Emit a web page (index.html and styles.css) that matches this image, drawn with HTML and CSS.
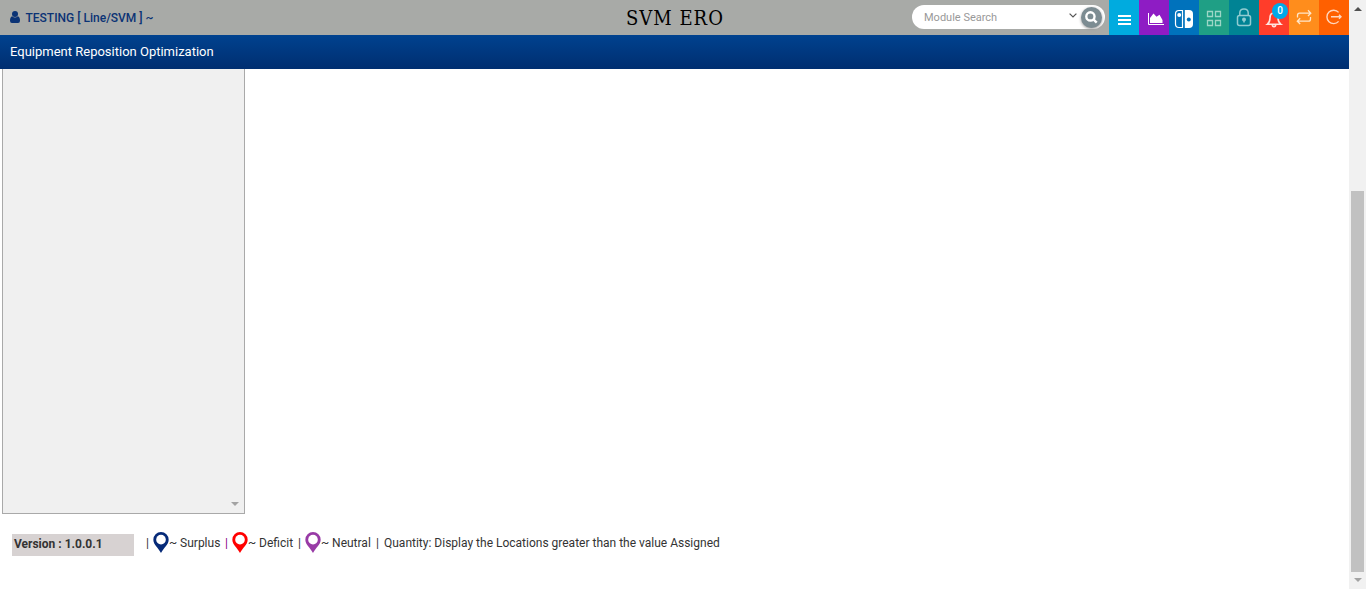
FILE: index.html
```html
<!DOCTYPE html>
<html lang="en">
<head>
<meta charset="utf-8">
<title>SVM ERO</title>
<link rel="stylesheet" href="styles.css">
</head>
<body>
<div class="app">
  <div class="page">
    <header class="topbar">
      <div class="user">
        <svg class="user-icon" width="10" height="12" viewBox="0 0 10 12"><circle cx="5" cy="3" r="3"/><path d="M2.2 5.3Q5 7.8 7.8 5.3Q10 6 10 9.8Q10 12 8 12H2Q0 12 0 9.8Q0 6 2.2 5.3Z"/></svg>
        <span class="user-name">TESTING [ Line/SVM ] ~</span>
      </div>
      <h1 class="title">SVM ERO</h1>
      <div class="tools">
        <div class="search">
          <span class="search-text">Module Search</span>
          <svg class="chevron" width="8" height="5" viewBox="0 0 8 5"><path d="M.6.6L4 4L7.4.6"/></svg>
          <span class="search-button"><svg width="13" height="13" viewBox="0 0 12 12"><circle cx="5" cy="5" r="3.8"/><path d="M8 8L10.8 10.8"/></svg></span>
        </div>
        <nav class="tiles">
          <a class="tile menu"><svg width="30" height="35" viewBox="0 0 30 35"><path d="M9 16H22M9 20H22M9 24H22" stroke="#fff" stroke-width="2"/></svg></a>
          <a class="tile chart"><svg width="30" height="35" viewBox="0 0 30 35"><path d="M9.5 13V24.5H25" fill="none" stroke="#fff"/><path d="M11 23V18L14.5 13.5L17.5 16.8L20.5 14.8L23.5 20V23Z" fill="#fff"/></svg></a>
          <a class="tile switch"><svg width="30" height="35" viewBox="0 0 30 35"><path d="M13.5 10.5H10Q6.5 10.5 6.5 14V24Q6.5 27.5 10 27.5H13.5Z" fill="none" stroke="#fff" stroke-width="1.2"/><circle cx="10.2" cy="15" r="2" fill="#fff"/><path d="M15.8 10H20Q24 10 24 14V24Q24 28 20 28H15.8Z" fill="#fff"/><circle cx="19.8" cy="19.5" r="2" fill="#0072bc"/></svg></a>
          <a class="tile grid"><svg width="30" height="35" viewBox="0 0 30 35"><path d="M8.5 11.5H13.5V16.5H8.5ZM16.5 11.5H21.5V16.5H16.5ZM8.5 20.5H13.5V25.5H8.5ZM16.5 20.5H21.5V25.5H16.5Z" fill="none" stroke="#9cd6c6" stroke-width="1.3"/></svg></a>
          <a class="tile lock"><svg width="30" height="35" viewBox="0 0 30 35"><g fill="none" stroke="#91ccd1" stroke-width="1.5"><rect x="8.5" y="15.5" width="13" height="10" rx="2"/><path d="M10.8 15.5V13Q10.8 9 15 9T19.2 13V15.5"/></g><circle cx="15" cy="19.4" r="2" fill="#91ccd1"/><path d="M15 19V22.5" stroke="#91ccd1" stroke-width="1.5"/></svg></a>
          <a class="tile bell"><svg width="30" height="35" viewBox="0 0 30 35"><path d="M8.3 24.3Q11 22 11 18Q11 13 15 13T19 18Q19 22 21.9 24.3ZM13.3 24.5Q13.3 26.6 15 26.6T16.7 24.5M15 13V11" fill="none" stroke="#ffe5e0" stroke-width="1.6"/></svg><span class="badge">0</span></a>
          <a class="tile swap"><svg width="30" height="35" viewBox="0 0 30 35"><path d="M8.5 17.5V15.5Q8.5 13.2 10.5 13.2H21.5M19 10.3L21.8 13.2L19 16M21.5 17V19Q21.5 21.2 19.5 21.2H8.5M11.2 18.3L8.3 21.2L11.2 24" fill="none" stroke="#ffe6c9" stroke-width="1.3"/></svg></a>
          <a class="tile exit"><svg width="30" height="35" viewBox="0 0 30 35"><path d="M19.6 12.4A6.7 6.7 0 1 0 19.6 21.4M12 16.8H22M20 14.8L22 16.8L20 18.8" fill="none" stroke="#ffd7bf" stroke-width="1.4"/></svg></a>
        </nav>
      </div>
    </header>
    <div class="subbar">Equipment Reposition Optimization</div>
    <main>
      <div class="panel"><span class="arrow down pale"></span></div>
      <footer class="legend">
        <span class="version">Version : 1.0.0.1</span>
        <span class="legend-item surplus"><span>|</span><svg class="pin" viewBox="0 0 15 20"><path d="M7.5 0A7.3 7.3 0 0 1 14.8 7.3C14.8 12 10 15 7.5 20C5 15 .2 12 .2 7.3A7.3 7.3 0 0 1 7.5 0Z" fill="#062a78"/><circle cx="7.5" cy="7.3" r="4.6" fill="#fff"/></svg><span>~ Surplus</span></span>
        <span class="legend-item deficit"><span class="purple">|</span><svg class="pin" viewBox="0 0 15 20"><path d="M7.5 0A7.3 7.3 0 0 1 14.8 7.3C14.8 12 10 15 7.5 20C5 15 .2 12 .2 7.3A7.3 7.3 0 0 1 7.5 0Z" fill="#f00"/><circle cx="7.5" cy="7.3" r="4.6" fill="#fff"/></svg><span>~ Deficit</span></span>
        <span class="legend-item neutral"><span>|</span><svg class="pin" viewBox="0 0 15 20"><path d="M7.5 0A7.3 7.3 0 0 1 14.8 7.3C14.8 12 10 15 7.5 20C5 15 .2 12 .2 7.3A7.3 7.3 0 0 1 7.5 0Z" fill="#983ba6"/><circle cx="7.5" cy="7.3" r="4.6" fill="#fff"/></svg><span>~ Neutral</span></span>
        <span class="divider">|</span>
        <span class="quantity">Quantity: Display the Locations greater than the value Assigned</span>
      </footer>
    </main>
  </div>
  <div class="scrollbar">
    <span class="arrow up"></span>
    <span class="thumb"></span>
    <span class="arrow down"></span>
  </div>
</div>
</body>
</html>
```
FILE: styles.css
```css
* { box-sizing: border-box; }
body { margin: 0; overflow: hidden; font: 12px Roboto, sans-serif; color: #333; background: #fff; }
svg { display: block; flex: none; }
.app { display: flex; width: 1366px; height: 589px; }
.page { width: 1349px; }
.topbar { display: grid; grid-template-columns: 626px 1fr 440px; grid-template-rows: 35px; height: 35px; background: #a8aaa7; }
.user { display: flex; align-items: center; padding-left: 10px; color: #0b3375; font-weight: 500; }
.user-icon { fill: #0b3375; margin-top: -1px; }
.user-name { margin-left: 5.5px; white-space: pre; }
.title { margin: 0; font: 20px/37px "DejaVu Serif Condensed", "DejaVu Serif", serif; font-stretch: condensed; letter-spacing: 1px; color: #000; white-space: nowrap; }
.tools { display: flex; justify-content: flex-end; }
.search { display: flex; align-items: center; width: 193px; height: 24px; margin: 5px 4px 0 0; padding: 0 2px 0 12px; border-radius: 12px; background: #fff; }
.search-text { flex: 1; font-size: 11px; color: #999; }
.chevron { margin: -4px 4px 0 0; fill: none; stroke: #555; stroke-width: 1.2; }
.search-button { display: flex; align-items: center; justify-content: center; width: 21px; height: 21px; margin-right: 1px; border-radius: 50%; background: #7c8c92; box-shadow: 0 1px 3px #999; }
.search-button svg { fill: none; stroke: #fff; stroke-width: 2.2; }
.tiles { display: flex; }
.tile { position: relative; width: 30px; height: 35px; }
.menu { background: #00abdf; }
.chart { background: #8e1cc4; }
.switch { background: #0072bc; }
.grid { background: #1f9f85; }
.lock { background: #008394; }
.bell { background: #ff3d2a; }
.swap { background: #ff8d1c; }
.exit { background: #ff6000; }
.badge { position: absolute; left: 13px; top: 3px; width: 16px; height: 16px; border-radius: 50%; background: #00a9e8; color: #fff; font: 500 10px/16px Roboto, sans-serif; text-align: center; }
.subbar { height: 34px; padding-left: 10px; font-size: 13px; line-height: 33px; color: #fff; background: linear-gradient(#00428f, #002e70); }
.panel { display: flex; align-items: flex-end; justify-content: flex-end; width: 243px; height: 445px; margin-left: 2px; padding: 0 5px 7px 0; border: 1px solid #a9a9a9; border-top: 0; background: #f0f0f0; }
.legend { display: flex; align-items: flex-start; padding: 18px 0 0 12px; line-height: 22px; white-space: nowrap; }
.version { width: 122px; height: 22px; margin: 2px 12px 0 0; padding-left: 2px; line-height: 21px; font-weight: 700; background: #d7d2d2; }
.legend-item { display: flex; }
.surplus { width: 79px; }
.deficit { width: 73px; }
.neutral { width: 78px; }
.purple { color: #808; }
.pin { width: 16px; height: 21px; margin: 0 -.5px 0 4.5px; }
.divider { width: 8px; }
.arrow { width: 0; height: 0; border: 4px solid transparent; }
.up { border-top: 0; border-bottom-color: #505050; }
.down { border-bottom: 0; border-top-color: #a3a3a3; }
.scrollbar { display: flex; flex-direction: column; align-items: center; width: 17px; padding: 7px 0; background: #f1f1f1; }
.thumb { width: 13px; height: 381px; margin: 180px 0 6px; background: #c1c1c1; }
```
